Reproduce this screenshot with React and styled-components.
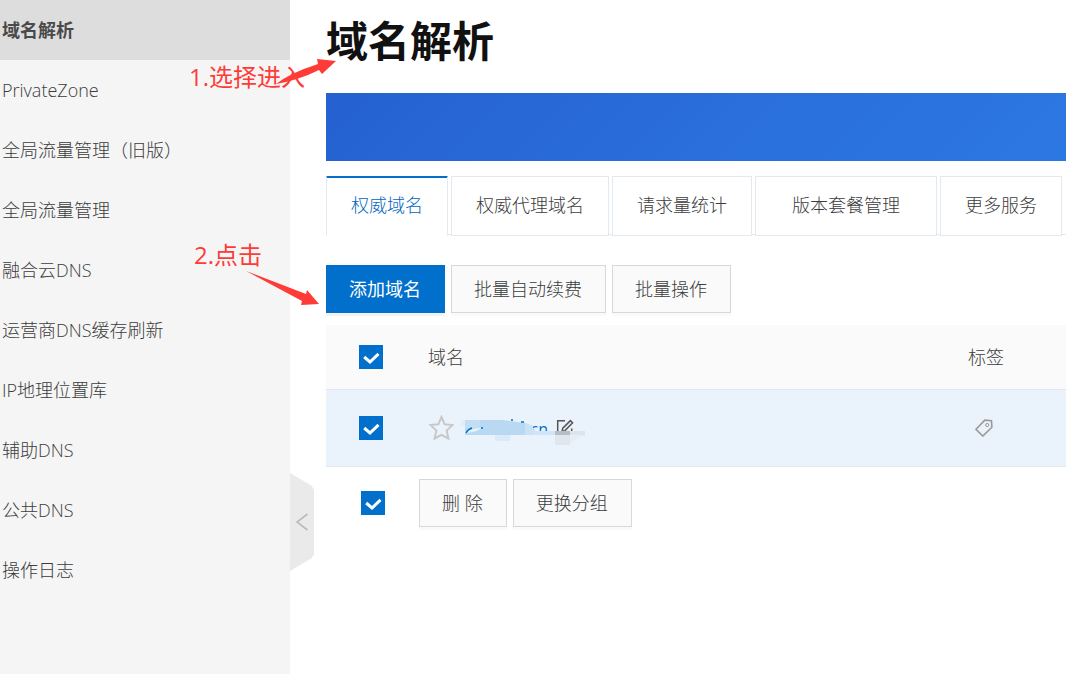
import React, { useState } from "react";
import styled, { createGlobalStyle } from "styled-components";

const GlobalStyle = createGlobalStyle`
  * {
    box-sizing: border-box;
  }
  body {
    margin: 0;
    background-color: #fff;
    color: #3c3c3c;
    font-family: "Open Sans", "Noto Sans CJK SC", sans-serif;
    font-size: 18px;
    font-weight: 300;
    line-height: 24px;
  }
  button, input {
    font: inherit;
  }
`;

const menu = [
  "域名解析",
  "PrivateZone",
  "全局流量管理（旧版）",
  "全局流量管理",
  "融合云DNS",
  "运营商DNS缓存刷新",
  "IP地理位置库",
  "辅助DNS",
  "公共DNS",
  "操作日志",
];

const tabs = [
  { label: "权威域名" },
  { label: "权威代理域名" },
  { label: "请求量统计" },
  { label: "版本套餐管理", wide: true },
  { label: "更多服务" },
];

function Tick({ label }) {
  return (
    <TickBox>
      <input type="checkbox" defaultChecked aria-label={label} />
      <svg viewBox="0 0 24 24" aria-hidden="true">
        <path d="M5.200 12l5.800 5L19.500 8.800" fill="none" stroke="#fff" strokeWidth="3" />
      </svg>
    </TickBox>
  );
}

function StarIcon() {
  return (
    <svg width="26" height="26" viewBox="0 0 26 26" aria-hidden="true">
      <path
        d="M13.500 2l3.200 7.300 7.700.8-5.700 5.500 1.700 7.900-6.900-3.700-6.900 3.700 1.700-7.900-5.700-5.500 7.700-.8z"
        fill="none"
        stroke="#c8c8c8"
        strokeWidth="2"
      />
    </svg>
  );
}

function EditIcon() {
  return (
    <svg width="18" height="18" viewBox="0 0 18 18" aria-hidden="true">
      <path
        d="M9 1.700H1.700v14.500h14V9.500M6 12.500l.8-3.300 7.600-7.600 2.200 2.200-7.600 7.800z"
        fill="none"
        stroke="#555"
        strokeWidth="1.5"
      />
    </svg>
  );
}

function TagIcon() {
  return (
    <svg width="18" height="18" viewBox="0 0 18 18" aria-hidden="true">
      <path d="M1 10.300L9.800 1.200l6.700.6.4 6.500-9.100 8.700z" fill="none" stroke="#999" strokeWidth="1.6" />
      <circle cx="12.2" cy="6" r="1.6" fill="none" stroke="#999" />
    </svg>
  );
}

// blocks that hide the customer's domain name
function Mosaic() {
  return (
    <MosaicSvg width="124" height="27" viewBox="0 0 124 27" aria-hidden="true">
      <path d="M0 2h4v6H0z" fill="#e1eef9" />
      <path d="M4 2h38l22 3 8 3v9H4z" fill="#b9d9f2" />
      <path d="M4 2h15v8H4z" fill="#c1def4" />
      <path d="M64 5l8 3v2l2 1v2h12v4H64z" fill="#cbe2f6" />
      <path d="M72 13h22v4H72z" fill="#d0e5f7" />
      <path d="M6 14q5-4 15-4-6 4-15 5z" fill="#eaf3fb" />
      <path d="M5 15q2-4 6-5M20 10h2M50 2h2M60 4h3" fill="none" stroke="#0070cc" strokeWidth="1.4" />
      <path d="M34 17h15v6H34z" fill="#dbeaf8" />
      <path d="M94 13h30v4H94z" fill="#dce5ed" />
      <path d="M94 13h15v4H94z" fill="#b8bec4" />
      <path d="M94 17h15v10H94z" fill="#dee6ee" />
      <path d="M109 17h15l-15 8z" fill="#e5edf5" />
    </MosaicSvg>
  );
}

function App() {
  const [tab, setTab] = useState(0);

  return (
    <Page>
      <GlobalStyle />
      <Sidebar>
        <Menu>
          {menu.map((item, i) => (
            <li key={item}>
              <MenuLink href="#" $active={i === 0}>
                {item}
              </MenuLink>
            </li>
          ))}
        </Menu>
        <Collapse type="button" aria-label="收起菜单">
          <svg width="14" height="20" viewBox="0 0 14 20" aria-hidden="true">
            <path d="M12.500 2L2 10l10.500 8" fill="none" stroke="#bbb" strokeWidth="1.6" />
          </svg>
        </Collapse>
      </Sidebar>

      <Main>
        <Title>域名解析</Title>
        <Banner />
        <Tabs role="tablist">
          {tabs.map((t, i) => (
            <Tab
              key={t.label}
              type="button"
              role="tab"
              aria-selected={tab === i}
              $active={tab === i}
              $wide={t.wide}
              onClick={() => setTab(i)}
            >
              {t.label}
            </Tab>
          ))}
        </Tabs>

        <Toolbar>
          <Button type="button" $primary>添加域名</Button>
          <Button type="button">批量自动续费</Button>
          <Button type="button">批量操作</Button>
        </Toolbar>

        <Table>
          <thead>
            <tr>
              <CheckHead><Tick label="全选" /></CheckHead>
              <Head>域名</Head>
              <TagHead>标签</TagHead>
            </tr>
          </thead>
          <tbody>
            <tr>
              <CheckCell><Tick label="选择域名" /></CheckCell>
              <Cell>
                <DomainRow>
                  <IconButton type="button" aria-label="收藏"><StarIcon /></IconButton>
                  <Domain>
                    <a href="#">cn</a>
                    <Mosaic />
                  </Domain>
                  <IconButton type="button" aria-label="编辑"><EditIcon /></IconButton>
                </DomainRow>
              </Cell>
              <TagCell>
                <IconButton type="button" aria-label="编辑标签"><TagIcon /></IconButton>
              </TagCell>
            </tr>
          </tbody>
        </Table>

        <Footer>
          <Tick label="选择全部域名" />
          <FooterActions>
            <Button type="button">删 除</Button>
            <Button type="button">更换分组</Button>
          </FooterActions>
        </Footer>
      </Main>

      <Note $left={189} $top={61}>1.选择进入</Note>
      <Note $left={194} $top={239}>2.点击</Note>
      <Arrows width="400" height="320" viewBox="0 0 400 320" aria-hidden="true">
        <path d="M276 84q14-11 42-20l-1-5 19 2-14 13-3-4q-20 10-43 14z" fill="#ff3b38" />
        <path d="M246 271l60 23 1-4 12 14-18 1 1-4z" fill="#ff3b38" />
      </Arrows>
    </Page>
  );
}

const Page = styled.div`
  position: relative;
  display: flex;
  min-height: 100vh;
`;

const Sidebar = styled.nav`
  position: relative;
  flex: 0 0 290px;
  background-color: #f5f5f5;
`;

const Menu = styled.ul`
  list-style: none;
  margin: 0;
  padding: 0;
`;

const MenuLink = styled.a`
  display: flex;
  align-items: center;
  height: 60px;
  padding: 0 2px;
  color: ${(p) => (p.$active ? "#4a4a4a" : "#3c3c3c")};
  background-color: ${(p) => (p.$active ? "#ddd" : "transparent")};
  font-weight: ${(p) => (p.$active ? 700 : 300)};
  text-decoration: none;
`;

const Collapse = styled.button`
  position: absolute;
  top: 473px;
  left: 100%;
  display: flex;
  align-items: center;
  justify-content: center;
  width: 24px;
  height: 98px;
  padding: 0;
  border: 0;
  background-color: #eaeaea;
  clip-path: polygon(0 0, 90% 13%, 100% 17%, 100% 83%, 90% 87%, 0 100%);
  cursor: pointer;
`;

const Main = styled.main`
  flex: 1;
  min-width: 0;
  padding-left: 36px;
`;

const Title = styled.h1`
  margin: 0;
  padding-top: 11px;
  height: 93px;
  color: #111;
  font-size: 42px;
  line-height: 60px;
  font-weight: 700;
`;

const Banner = styled.div`
  height: 68px;
  background: linear-gradient(135deg, #2561d0, #2a6fdb 55%, #2c78e3);
`;

const Tabs = styled.div`
  display: flex;
  gap: 3px;
  margin-top: 15px;
  height: 60px;
  background: linear-gradient(#e3e9ef, #e3e9ef) 0 58px / 100% 1px no-repeat;
`;

const Tab = styled.button`
  flex: none;
  height: 60px;
  padding: 0 ${(p) => (p.$wide ? 36 : 24)}px 2px;
  border: 1px solid #e3e9ef;
  background-color: #fff;
  color: #3c3c3c;
  font-weight: 300;
  cursor: pointer;
  ${(p) =>
    p.$active &&
    `
    color: #0064c0;
    border-bottom-color: #fff;
    box-shadow: inset 0 1px #0070cc;
    border-top-color: #0070cc;
  `}
`;

const Toolbar = styled.div`
  display: flex;
  gap: 6px;
  margin-top: 29px;
`;

const Button = styled.button`
  height: 48px;
  padding: 0 23px 0 22px;
  border: 1px solid ${(p) => (p.$primary ? "#0070cc" : "#d8d8d8")};
  background-color: ${(p) => (p.$primary ? "#0070cc" : "#fafafa")};
  color: ${(p) => (p.$primary ? "#fff" : "#3c3c3c")};
  font-weight: ${(p) => (p.$primary ? 400 : 300)};
  box-shadow: 0 3px ${(p) => (p.$primary ? "#f2f2f2" : "#fafafa")};
  cursor: pointer;
`;

const Table = styled.table`
  width: 100%;
  margin-top: 12px;
  border-spacing: 0;
  table-layout: fixed;
`;

const Head = styled.th`
  height: 65px;
  padding: 0;
  border-bottom: 1px solid #e3e8ed;
  background-color: #fafafa;
  font-weight: 300;
  text-align: left;
`;

const CheckHead = styled(Head)`
  width: 102px;
  padding-left: 33px;
`;

const TagHead = styled(Head)`
  width: 98px;
`;

const Cell = styled.td`
  height: 77px;
  padding: 0;
  border-bottom: 1px solid #e3e8ed;
  background-color: #eaf3fb;
`;

const CheckCell = styled(Cell)`
  padding-left: 33px;
`;

const TagCell = styled(Cell)`
  padding-left: 7px;
`;

const TickBox = styled.label`
  display: grid;
  width: 24px;
  height: 24px;
  cursor: pointer;
  input, svg {
    grid-area: 1 / 1;
    width: 24px;
    height: 24px;
    margin: 0;
  }
  input {
    appearance: none;
    border: 1px solid #c4c6cf;
    background-color: #fff;
  }
  input:checked {
    border-color: #0070cc;
    background-color: #0070cc;
  }
  svg {
    pointer-events: none;
  }
`;

const DomainRow = styled.div`
  display: flex;
  align-items: center;
`;

const IconButton = styled.button`
  display: flex;
  padding: 0;
  border: 0;
  background: none;
  cursor: pointer;
`;

const Domain = styled.div`
  position: relative;
  width: 83px;
  margin: 0 8px 0 11px;
  text-align: right;
  a {
    color: #0070cc;
    font-size: 16px;
    font-weight: 400;
    text-decoration: none;
  }
`;

const MosaicSvg = styled.svg`
  position: absolute;
  top: 2px;
  left: -4px;
  z-index: 1;
  pointer-events: none;
`;

const Footer = styled.div`
  display: flex;
  align-items: center;
  gap: 34px;
  padding: 12px 0 0 35px;
`;

const FooterActions = styled.div`
  display: flex;
  gap: 6px;
`;

const Note = styled.span`
  position: absolute;
  left: ${(p) => p.$left}px;
  top: ${(p) => p.$top}px;
  color: #ff3b38;
  font-size: 24px;
  line-height: 32px;
  font-weight: 400;
  white-space: nowrap;
`;

const Arrows = styled.svg`
  position: absolute;
  top: 0;
  left: 0;
  pointer-events: none;
`;

export default App;
